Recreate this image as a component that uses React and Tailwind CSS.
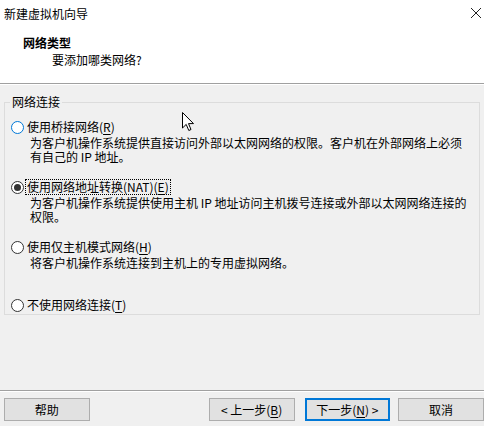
import React from "react";

const FONT = { fontFamily: '"Noto Sans CJK SC", "Noto Sans", sans-serif' };

// Windows-style radio bullet
function Radio({ checked, hover }) {
  return (
    <span
      className={`w-[13px] h-[13px] rounded-full border bg-white flex items-center justify-center shrink-0 ${
        hover ? "border-[#0078d7]" : "border-[#333333]"
      }`}
    >
      {checked && <span className="w-[7px] h-[7px] rounded-full bg-[#333333]" />}
    </span>
  );
}

function Key({ children }) {
  return <span className="underline underline-offset-2">{children}</span>;
}

function Option({ checked, hover, focus, label, desc, className = "" }) {
  return (
    <div className={`flex flex-col ${className}`}>
      <div className="flex items-center gap-[2px] pl-[6px] h-[14px]">
        <Radio checked={checked} hover={hover} />
        <span className={`whitespace-nowrap px-[1px] ${focus ? "outline outline-1 outline-dotted outline-black" : ""}`}>
          {label}
        </span>
      </div>
      {desc && <div className="pl-[25px] mt-[2px] whitespace-nowrap">{desc}</div>}
    </div>
  );
}

function Button({ children, primary, className = "" }) {
  return (
    <button
      className={`h-[23px] w-[86px] bg-[#e1e1e1] flex items-center justify-center text-black ${
        primary ? "border-2 border-[#0078d7]" : "border border-[#adadad]"
      } ${className}`}
    >
      {children}
    </button>
  );
}

export default function App() {
  return (
    <div className="relative w-[484px] h-[426px] bg-[#f0f0f0] flex flex-col text-[12px] leading-[14px] text-black overflow-hidden" style={FONT}>
      {/* Title + header */}
      <div className="bg-white h-[84px] border-b border-[#a0a0a0] shadow-[0_1px_0_#ffffff] flex flex-col">
        <div className="h-[28px] flex items-center justify-between pl-[4px] pr-[2px]">
          <span>新建虚拟机向导</span>
          <svg width="12" height="12" viewBox="0 0 12 12" className="mb-[2px]">
            <path d="M1 1 L11 11 M11 1 L1 11" stroke="#222" strokeWidth="1" />
          </svg>
        </div>
        <div className="pl-[23px] mt-[8px] font-bold">网络类型</div>
        <div className="pl-[52px] mt-[3px]">要添加哪类网络?</div>
      </div>

      {/* Group box */}
      <div className="flex-1 px-[4px] pt-[11px]">
        <fieldset className="border border-[#dcdcdc] h-[220px] px-0">
          <legend className="ml-[5px] px-[2px]">网络连接</legend>
          <div className="flex flex-col">
            <Option
              hover
              className="mt-[11px]"
              label={<>使用桥接网络(<Key>R</Key>)</>}
              desc={
                <>
                  为客户机操作系统提供直接访问外部以太网网络的权限。客户机在外部网络上必须
                  <br />
                  有自己的 IP 地址。
                </>
              }
            />
            <Option
              checked
              focus
              className="mt-[16px]"
              label={<>使用网络地址转换(NAT)(<Key>E</Key>)</>}
              desc={
                <>
                  为客户机操作系统提供使用主机 IP 地址访问主机拨号连接或外部以太网网络连接的
                  <br />
                  权限。
                </>
              }
            />
            <Option
              className="mt-[16px]"
              label={<>使用仅主机模式网络(<Key>H</Key>)</>}
              desc={<>将客户机操作系统连接到主机上的专用虚拟网络。</>}
            />
            <Option className="mt-[28px]" label={<>不使用网络连接(<Key>T</Key>)</>} />
          </div>
        </fieldset>
      </div>

      {/* Footer */}
      <div className="h-[36px] border-t border-[#a0a0a0] shadow-[inset_0_1px_0_#ffffff] flex items-start pt-[7px] pl-[4px]">
        <Button>帮助</Button>
        <Button className="ml-[119px]">&lt; 上一步(<Key>B</Key>)</Button>
        <Button primary className="ml-[10px]">下一步(<Key>N</Key>) &gt;</Button>
        <Button className="ml-[8px]">取消</Button>
      </div>

      {/* mouse pointer */}
      <svg className="absolute left-[182px] top-[112px]" width="13" height="20" viewBox="0 0 13 20">
        <path d="M0.5 0.5 L0.5 16 L4.2 12.4 L6.8 18.5 L9 17.5 L6.5 11.6 L11.5 11.6 Z" fill="#fff" stroke="#000" strokeWidth="1" strokeLinejoin="round" />
      </svg>
    </div>
  );
}
